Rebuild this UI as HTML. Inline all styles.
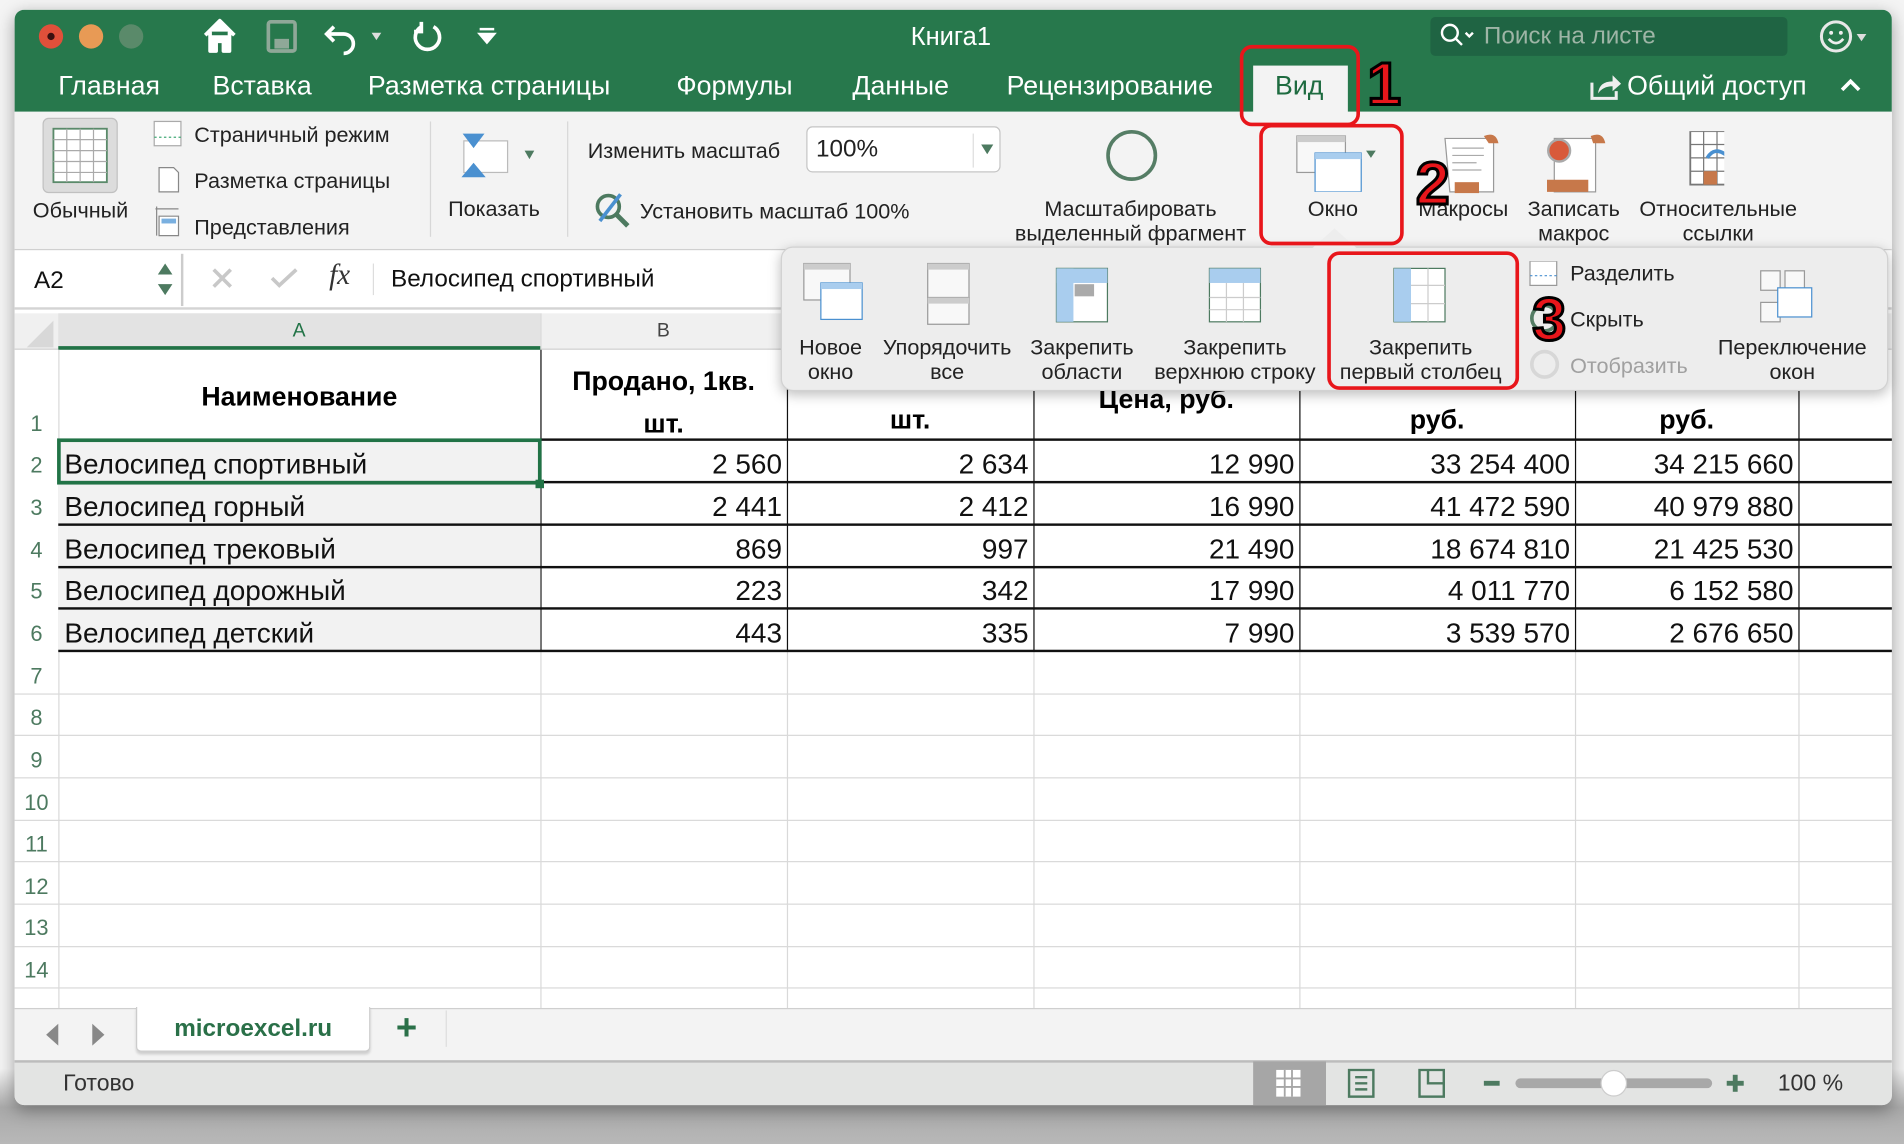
<!DOCTYPE html>
<html><head><meta charset="utf-8">
<style>
*{margin:0;padding:0;box-sizing:border-box}
html,body{width:1904px;height:1144px;overflow:hidden;background:#ececec}
#s{position:absolute;left:0;top:0;width:1568px;height:942px;transform:scale(1.21429,1.21444);transform-origin:0 0;font-family:"Liberation Sans","DejaVu Sans",sans-serif;background:linear-gradient(#f4f4f4 0,#f4f4f4 880px,#a9a9a9 912px,#b8b8b8 942px)}
.a{position:absolute;white-space:nowrap}
.t{color:#fff;font-size:22px;top:58px}
.r{font-size:17.8px;color:#222}
.c{text-align:center}
.cell{position:absolute;font-size:23px;color:#111;height:34px;line-height:36px;white-space:nowrap}
.num{text-align:right;padding-right:4px}
.rn{position:absolute;left:12px;width:36px;text-align:center;font-size:18px;color:#4d7a60}
.hl{position:absolute;height:1px;background:#d9d9d9}
.vl{position:absolute;width:1px;background:#d9d9d9}
.red{position:absolute;border:3px solid #e8161b;border-radius:10px}
.big{position:absolute;font-size:50px;font-weight:bold;color:#e8161b;-webkit-text-stroke:2.5px #000;font-family:"Liberation Sans",sans-serif}
</style></head><body><div id="s">
<div class="a" style="left:12px;top:8px;width:1546px;height:902px;background:#fff;border-radius:8px;box-shadow:0 4px 14px rgba(0,0,0,.35);overflow:hidden">
 <div class="a" style="left:0;top:0;width:1546px;height:84px;background:#27784c"></div>
 <div class="a" style="left:0;top:84px;width:1546px;height:114px;background:#f3f3f3;border-bottom:1px solid #d0d0d0"></div>
 <div class="a" style="left:0;top:199px;width:1546px;height:48px;background:#fff;border-bottom:2px solid #d4d4d4"></div>
 <div class="a" style="left:0;top:250px;width:1546px;height:30px;background:#f0f0f0;border-bottom:1px solid #d0d0d0"></div>
 <div class="a" style="left:0;top:822px;width:1546px;height:43px;background:#f3f3f3;border-top:1px solid #cfcfcf"></div>
 <div class="a" style="left:0;top:865px;width:1546px;height:37px;background:#e3e4e3;border-top:2px solid #bcbcbc"></div>
</div>
<div class="a" style="left:32px;top:20px;width:20px;height:20px;border-radius:50%;background:#e0503a"></div>
<div class="a" style="left:39px;top:27px;width:6px;height:6px;border-radius:50%;background:#3a1010"></div>
<div class="a" style="left:65px;top:20px;width:20px;height:20px;border-radius:50%;background:#e89a55"></div>
<div class="a" style="left:98px;top:20px;width:20px;height:20px;border-radius:50%;background:#5a8a6a"></div>
<svg class="a" style="left:165px;top:14px" width="260" height="32" viewBox="0 0 260 32">
 <path d="M4 15 L16 3 L28 15 M8 12 V28 H13 V20 H19 V28 H24 V12" fill="#fff" stroke="#fff" stroke-width="3" stroke-linejoin="round"/>
 <rect x="56" y="4" width="22" height="24" rx="2" fill="none" stroke="#8fa898" stroke-width="3"/><rect x="61" y="18" width="12" height="8" fill="#8fa898"/>
 <path d="M110 8 L104 14 L110 20 M104 14 H118 A8 8 0 0 1 118 30" fill="none" stroke="#fff" stroke-width="3"/>
 <path d="M141 13 l4 6 4-6z" fill="#ddd"/>
 <path d="M182 8 A10 10 0 1 0 192 8 M182 4 V12 H176" fill="none" stroke="#fff" stroke-width="3"/>
 <path d="M230 10 H242 M230 14 l6 7 6-7z" fill="#fff" stroke="#fff" stroke-width="2"/>
</svg>
<div class="a" style="left:750px;top:19px;font-size:21px;color:#fff">Книга1</div>
<div class="a" style="left:1178px;top:14px;width:294px;height:32px;background:#1f6443;border-radius:4px"></div>
<svg class="a" style="left:1185px;top:18px" width="36" height="24"><circle cx="9" cy="9" r="6.5" fill="none" stroke="#fff" stroke-width="2"/><path d="M13 13 L19 19 M22 9 l3 3 3-3" stroke="#fff" stroke-width="2" fill="none"/></svg>
<div class="a" style="left:1222px;top:19px;font-size:20px;color:#9eb5a6">Поиск на листе</div>
<svg class="a" style="left:1497px;top:15px" width="48" height="32"><circle cx="15" cy="15" r="12" fill="none" stroke="#e8e8e8" stroke-width="2.5"/><circle cx="11" cy="12" r="1.6" fill="#eee"/><circle cx="19" cy="12" r="1.6" fill="#eee"/><path d="M9 17 Q15 24 21 17" stroke="#eee" stroke-width="2.2" fill="none"/><path d="M32 13 l4 6 4-6z" fill="#ddd"/></svg>
<div class="a t" style="left:48px">Главная</div>
<div class="a t" style="left:175px">Вставка</div>
<div class="a t" style="left:303px">Разметка страницы</div>
<div class="a t" style="left:557px">Формулы</div>
<div class="a t" style="left:702px">Данные</div>
<div class="a t" style="left:829px">Рецензирование</div>
<div class="a" style="left:1032px;top:54px;width:78px;height:39px;background:#f3f3f3"></div>
<div class="a" style="left:1050px;top:58px;font-size:22px;color:#1e6b40">Вид</div>
<svg class="a" style="left:1308px;top:58px" width="28" height="26"><path d="M3 10 V23 H23 V17" fill="none" stroke="#eee" stroke-width="2.5"/><path d="M8 19 Q9 9 20 9 V4 L27 11 L20 17 V13 Q12 13 8 19z" fill="#eee"/></svg>
<div class="a t" style="left:1340px">Общий доступ</div>
<svg class="a" style="left:1514px;top:62px" width="20" height="16"><path d="M3 12 L10 5 L17 12" stroke="#fff" stroke-width="3" fill="none"/></svg>
<div class="a" style="left:35px;top:97px;width:62px;height:62px;background:#dcdcdc;border:1px solid #c0c0c0;border-radius:5px"></div>
<svg class="a" style="left:42px;top:104px" width="48" height="48"><rect x="2" y="2" width="44" height="44" fill="#fff" stroke="#5a8a6a" stroke-width="1.5"/><path d="M2 11 H46 M2 20 H46 M2 29 H46 M2 38 H46 M13 2 V46 M24 2 V46 M35 2 V46" stroke="#aaa" stroke-width="1"/></svg>
<div class="a r" style="left:27px;top:163px">Обычный</div>
<svg class="a" style="left:125px;top:98px" width="26" height="100"><rect x="2" y="2" width="22" height="20" fill="#fff" stroke="#aaa"/><path d="M2 15 H24" stroke="#4a7" stroke-dasharray="2 2"/><path d="M6 40 V60 H22 V44 L18 40z" fill="#fff" stroke="#888"/><path d="M3 74 H22 M4 72 V96 M6 80 H22 V96 H6z" fill="#fff" stroke="#888"/><rect x="8" y="82" width="12" height="4" fill="#7ab0e0"/></svg>
<div class="a r" style="left:160px;top:101px">Страничный режим</div>
<div class="a r" style="left:160px;top:139px">Разметка страницы</div>
<div class="a r" style="left:160px;top:177px">Представления</div>
<div class="a" style="left:354px;top:100px;width:1px;height:95px;background:#d7d7d7"></div>
<svg class="a" style="left:376px;top:106px" width="70" height="50"><rect x="6" y="10" width="36" height="26" fill="#fff" stroke="#bbb"/><path d="M5 4 H23 L14 16z M14 28 L24 40 H4z" fill="#4a90d0"/><path d="M56 18 l4 7 4-7z" fill="#4d7a60"/></svg>
<div class="a r" style="left:369px;top:162px">Показать</div>
<div class="a" style="left:467px;top:100px;width:1px;height:95px;background:#d7d7d7"></div>
<div class="a r" style="left:484px;top:114px">Изменить масштаб</div>
<div class="a" style="left:664px;top:104px;width:160px;height:38px;background:#fff;border:1px solid #c5c5c5;border-radius:5px"></div>
<div class="a" style="left:672px;top:112px;font-size:20px;color:#222">100%</div>
<div class="a" style="left:801px;top:110px;width:1px;height:28px;background:#ddd"></div>
<svg class="a" style="left:806px;top:117px" width="14" height="10"><path d="M2 2 l5 8 5-8z" fill="#4d7a60"/></svg>
<svg class="a" style="left:489px;top:158px" width="32" height="32"><circle cx="12" cy="12" r="9" fill="none" stroke="#4d7a60" stroke-width="3"/><path d="M19 19 L28 28" stroke="#4d7a60" stroke-width="4"/><path d="M5 24 L22 2" stroke="#4a90d0" stroke-width="3"/></svg>
<div class="a r" style="left:527px;top:164px">Установить масштаб 100%</div>
<div class="a" style="left:911px;top:107px;width:42px;height:42px;border:3px solid #557d65;border-radius:50%"></div>
<div class="a r c" style="left:826px;top:162px;width:210px;line-height:20px">Масштабировать<br>выделенный фрагмент</div>
<svg class="a" style="left:1065px;top:108px" width="70" height="50"><rect x="3" y="4" width="40" height="30" fill="#f8f8f8" stroke="#999"/><rect x="3" y="4" width="40" height="5" fill="#ccc"/><rect x="18" y="18" width="38" height="32" fill="#fff" stroke="#4a90d0"/><rect x="18" y="18" width="38" height="5" fill="#a9cdee"/><path d="M60 16 l4 6 4-6z" fill="#4d7a60"/></svg>
<div class="a r" style="left:1077px;top:162px">Окно</div>
<svg class="a" style="left:1180px;top:108px" width="240" height="56"><path d="M10 6 H50 V50 H14z" fill="#fff" stroke="#999"/><path d="M16 14 H42 M16 20 H42 M16 26 H36 M16 32 H40" stroke="#aaa"/><path d="M42 4 Q52 0 54 10 H46z" fill="#c7784a"/><rect x="18" y="42" width="20" height="9" fill="#c7784a"/><rect x="100" y="6" width="34" height="44" fill="#fff" stroke="#999"/><circle cx="104" cy="16" r="9" fill="#d85a3a" stroke="#aaa" stroke-width="2"/><path d="M130 4 Q140 0 142 10 H132z M94 40 H128 V50 H94z" fill="#c7784a"/><rect x="212" y="0" width="44" height="44" fill="#fff" stroke="#777" stroke-width="1.5"/><path d="M212 11 H256 M212 22 H256 M212 33 H256 M223 0 V44 M234 0 V44 M245 0 V44" stroke="#777"/><rect x="223" y="33" width="11" height="11" fill="#c7784a"/><path d="M226 22 Q232 12 242 20" stroke="#4a90d0" stroke-width="3" fill="none"/></svg>
<div class="a r" style="left:1168px;top:162px">Макросы</div>
<div class="a r c" style="left:1248px;top:162px;width:96px;line-height:20px">Записать<br>макрос</div>
<div class="a r c" style="left:1342px;top:162px;width:146px;line-height:20px">Относительные<br>ссылки</div>
<div class="a" style="left:12px;top:209px;width:139px;height:43px;border-right:2px solid #ccc"></div>
<div class="a" style="left:28px;top:220px;font-size:20px;color:#111">A2</div>
<svg class="a" style="left:128px;top:214px" width="16" height="34"><path d="M2 12 L8 3 L14 12z M2 20 L8 29 L14 20z" fill="#4d7a60"/></svg>
<svg class="a" style="left:172px;top:218px" width="80" height="26"><path d="M4 4 L18 18 M18 4 L4 18" stroke="#c8c8c8" stroke-width="3"/><path d="M52 11 L58 17 L72 4" stroke="#c8c8c8" stroke-width="3" fill="none"/></svg>
<div class="a" style="left:271px;top:214px;font-size:24px;font-style:italic;font-family:'Liberation Serif',serif;color:#333">fx</div>
<div class="a" style="left:307px;top:217px;width:1px;height:26px;background:#ddd"></div>
<div class="a" style="left:322px;top:219px;font-size:20px;color:#111">Велосипед спортивный</div>
<svg class="a" style="left:16px;top:262px" width="30" height="26"><path d="M28 2 V24 H6z" fill="#d8d8d8"/></svg>
<div class="a" style="left:48px;top:258px;width:397px;height:30px;background:#e3e3e3;border-bottom:3px solid #217346"></div>
<div class="a" style="left:241px;top:264px;font-size:16px;color:#217346">A</div>
<div class="a" style="left:541px;top:264px;font-size:16px;color:#444">B</div>
<div class="vl" style="left:445px;top:258px;height:30px"></div>
<div class="vl" style="left:648px;top:258px;height:30px"></div>
<div class="vl" style="left:48px;top:288px;height:542px"></div>
<div class="vl" style="left:445px;top:536px;height:294px"></div>
<div class="vl" style="left:648px;top:536px;height:294px"></div>
<div class="vl" style="left:851px;top:536px;height:294px"></div>
<div class="vl" style="left:1070px;top:536px;height:294px"></div>
<div class="vl" style="left:1297px;top:536px;height:294px"></div>
<div class="vl" style="left:1481px;top:536px;height:294px"></div>
<div class="a" style="left:445px;top:288px;width:1px;height:248px;background:#111"></div>
<div class="a" style="left:648px;top:288px;width:1px;height:248px;background:#111"></div>
<div class="a" style="left:851px;top:288px;width:1px;height:248px;background:#111"></div>
<div class="a" style="left:1070px;top:288px;width:1px;height:248px;background:#111"></div>
<div class="a" style="left:1297px;top:288px;width:1px;height:248px;background:#111"></div>
<div class="a" style="left:1481px;top:288px;width:1px;height:248px;background:#111"></div>
<div class="a" style="left:48px;top:362px;width:397px;height:174px;background:#f2f2f2"></div>
<div class="a" style="left:445px;top:361px;width:1113px;height:2px;background:#111"></div>
<div class="a" style="left:48px;top:396px;width:1510px;height:2px;background:#111"></div>
<div class="a" style="left:48px;top:431px;width:1510px;height:2px;background:#111"></div>
<div class="a" style="left:48px;top:466px;width:1510px;height:2px;background:#111"></div>
<div class="a" style="left:48px;top:500px;width:1510px;height:2px;background:#111"></div>
<div class="a" style="left:48px;top:535px;width:1510px;height:2px;background:#111"></div>
<div class="hl" style="left:12px;top:571px;width:1546px"></div>
<div class="hl" style="left:12px;top:605px;width:1546px"></div>
<div class="hl" style="left:12px;top:640px;width:1546px"></div>
<div class="hl" style="left:12px;top:675px;width:1546px"></div>
<div class="hl" style="left:12px;top:709px;width:1546px"></div>
<div class="hl" style="left:12px;top:744px;width:1546px"></div>
<div class="hl" style="left:12px;top:779px;width:1546px"></div>
<div class="hl" style="left:12px;top:813px;width:1546px"></div>
<div class="rn" style="top:339px">1</div><div class="rn" style="top:373px">2</div><div class="rn" style="top:408px">3</div><div class="rn" style="top:443px">4</div><div class="rn" style="top:477px">5</div><div class="rn" style="top:512px">6</div><div class="rn" style="top:547px">7</div><div class="rn" style="top:581px">8</div><div class="rn" style="top:616px">9</div><div class="rn" style="top:651px">10</div><div class="rn" style="top:685px">11</div><div class="rn" style="top:720px">12</div><div class="rn" style="top:754px">13</div><div class="rn" style="top:789px">14</div>
<div class="a" style="left:48px;top:314px;width:397px;text-align:center;font-size:22px;font-weight:bold">Наименование</div>
<div class="a" style="left:445px;top:296px;width:203px;text-align:center;font-size:22px;font-weight:bold;line-height:35px">Продано, 1кв.<br>шт.</div>
<div class="a" style="left:648px;top:333px;width:203px;text-align:center;font-size:22px;font-weight:bold">шт.</div>
<div class="a" style="left:851px;top:316px;width:219px;text-align:center;font-size:22px;font-weight:bold">Цена, руб.</div>
<div class="a" style="left:1070px;top:333px;width:227px;text-align:center;font-size:22px;font-weight:bold">руб.</div>
<div class="a" style="left:1297px;top:333px;width:184px;text-align:center;font-size:22px;font-weight:bold">руб.</div>
<div class="cell" style="left:53px;top:364px">Велосипед спортивный</div>
<div class="cell" style="left:53px;top:399px">Велосипед горный</div>
<div class="cell" style="left:53px;top:434px">Велосипед трековый</div>
<div class="cell" style="left:53px;top:468px">Велосипед дорожный</div>
<div class="cell" style="left:53px;top:503px">Велосипед детский</div>
<div class="cell num" style="left:445px;width:203px;top:364px">2 560</div><div class="cell num" style="left:648px;width:203px;top:364px">2 634</div><div class="cell num" style="left:851px;width:219px;top:364px">12 990</div><div class="cell num" style="left:1070px;width:227px;top:364px">33 254 400</div><div class="cell num" style="left:1297px;width:184px;top:364px">34 215 660</div>
<div class="cell num" style="left:445px;width:203px;top:399px">2 441</div><div class="cell num" style="left:648px;width:203px;top:399px">2 412</div><div class="cell num" style="left:851px;width:219px;top:399px">16 990</div><div class="cell num" style="left:1070px;width:227px;top:399px">41 472 590</div><div class="cell num" style="left:1297px;width:184px;top:399px">40 979 880</div>
<div class="cell num" style="left:445px;width:203px;top:434px">869</div><div class="cell num" style="left:648px;width:203px;top:434px">997</div><div class="cell num" style="left:851px;width:219px;top:434px">21 490</div><div class="cell num" style="left:1070px;width:227px;top:434px">18 674 810</div><div class="cell num" style="left:1297px;width:184px;top:434px">21 425 530</div>
<div class="cell num" style="left:445px;width:203px;top:468px">223</div><div class="cell num" style="left:648px;width:203px;top:468px">342</div><div class="cell num" style="left:851px;width:219px;top:468px">17 990</div><div class="cell num" style="left:1070px;width:227px;top:468px">4 011 770</div><div class="cell num" style="left:1297px;width:184px;top:468px">6 152 580</div>
<div class="cell num" style="left:445px;width:203px;top:503px">443</div><div class="cell num" style="left:648px;width:203px;top:503px">335</div><div class="cell num" style="left:851px;width:219px;top:503px">7 990</div><div class="cell num" style="left:1070px;width:227px;top:503px">3 539 570</div><div class="cell num" style="left:1297px;width:184px;top:503px">2 676 650</div>
<div class="a" style="left:47px;top:361px;width:399px;height:38px;border:3px solid #217346"></div>
<div class="a" style="left:441px;top:395px;width:7px;height:7px;background:#217346"></div>
<svg class="a" style="left:30px;top:840px" width="70" height="24"><path d="M18 3 L8 12 L18 21z" fill="#888"/><path d="M46 3 L56 12 L46 21z" fill="#888"/></svg>
<div class="a" style="left:112px;top:829px;width:193px;height:37px;background:#fff;border:1px solid #ccc;border-top:none;border-radius:0 0 4px 4px;box-shadow:0 2px 2px rgba(0,0,0,.15)"></div>
<div class="a" style="left:112px;top:836px;width:193px;text-align:center;font-size:20px;font-weight:bold;color:#2a7048">microexcel.ru</div>
<div class="a" style="left:326px;top:830px;font-size:30px;color:#2a7048;font-weight:bold">+</div>
<div class="a" style="left:367px;top:832px;width:1px;height:30px;background:#ddd"></div>
<div class="a" style="left:52px;top:882px;font-size:19px;color:#333">Готово</div>
<div class="a" style="left:1032px;top:874px;width:60px;height:36px;background:#a6a6a6"></div>
<svg class="a" style="left:1050px;top:880px" width="150" height="26"><rect x="1" y="1" width="20" height="22" fill="#fff"/><path d="M1 8 H21 M1 15 H21 M8 1 V23 M14 1 V23" stroke="#a6a6a6" stroke-width="1.5"/><rect x="61" y="1" width="20" height="22" fill="none" stroke="#4d7a60" stroke-width="2"/><path d="M66 7 H76 M66 12 H76 M66 17 H76" stroke="#4d7a60" stroke-width="2"/><rect x="119" y="1" width="20" height="22" fill="none" stroke="#4d7a60" stroke-width="2"/><path d="M126 1 V12 H139" stroke="#4d7a60" stroke-width="2" fill="none"/></svg>
<div class="a" style="left:1222px;top:890px;width:13px;height:4px;background:#4d7a60"></div>
<div class="a" style="left:1248px;top:888px;width:162px;height:8px;background:#a8a8a8;border-radius:4px"></div>
<div class="a" style="left:1318px;top:881px;width:22px;height:22px;background:#fff;border-radius:50%;border:1px solid #ccc"></div>
<div class="a" style="left:1422px;top:890px;width:14px;height:4px;background:#4d7a60"></div>
<div class="a" style="left:1427px;top:885px;width:4px;height:14px;background:#4d7a60"></div>
<div class="a" style="left:1464px;top:882px;font-size:19px;color:#333">100 %</div>
<div class="a" style="left:643px;top:203px;width:912px;height:119px;background:#ededed;border:1px solid #d2d2d2;border-radius:10px;box-shadow:0 3px 10px rgba(0,0,0,.25)"></div>
<svg class="a" style="left:1080px;top:188px" width="38" height="17"><path d="M0 17 L19 0 L38 17z" fill="#ededed"/></svg>
<svg class="a" style="left:660px;top:215px" width="840" height="56">
 <rect x="2" y="2" width="38" height="30" fill="#f8f8f8" stroke="#999"/><rect x="2" y="2" width="38" height="5" fill="#ccc"/><rect x="16" y="18" width="34" height="30" fill="#fff" stroke="#4a90d0"/><rect x="16" y="18" width="34" height="5" fill="#a9cdee"/>
 <rect x="104" y="2" width="34" height="28" fill="#f8f8f8" stroke="#999"/><rect x="104" y="2" width="34" height="5" fill="#ccc"/><rect x="104" y="30" width="34" height="22" fill="#f8f8f8" stroke="#999"/><rect x="104" y="30" width="34" height="5" fill="#ccc"/>
 <rect x="210" y="6" width="42" height="44" fill="#fff" stroke="#4d7a60"/><rect x="210" y="6" width="42" height="12" fill="#a9cdee"/><rect x="210" y="6" width="14" height="44" fill="#a9cdee"/><rect x="225" y="19" width="16" height="10" fill="#aaa"/>
 <rect x="336" y="6" width="42" height="44" fill="#fff" stroke="#4d7a60"/><rect x="336" y="6" width="42" height="12" fill="#a9cdee"/><path d="M336 30 H378 M336 40 H378 M350 18 V50 M364 18 V50" stroke="#ccc"/>
 <rect x="488" y="6" width="42" height="44" fill="#fff" stroke="#4d7a60"/><rect x="488" y="6" width="14" height="44" fill="#a9cdee"/><path d="M502 20 H530 M502 35 H530 M516 6 V50" stroke="#ccc"/>
 <rect x="600" y="0" width="22" height="20" fill="#fff" stroke="#999"/><path d="M600 12 H622" stroke="#4a90d0" stroke-dasharray="2 2"/>
 <rect x="790" y="8" width="16" height="16" fill="#f8f8f8" stroke="#999"/><rect x="810" y="8" width="16" height="16" fill="#f8f8f8" stroke="#999"/><rect x="790" y="34" width="16" height="16" fill="#f8f8f8" stroke="#999"/><rect x="804" y="22" width="28" height="24" fill="#fff" stroke="#4a90d0"/><path d="M840 22 l4 6 4-6z" fill="#4d7a60"/>
</svg>
<div class="a r c" style="left:649px;top:276px;width:70px;line-height:20px">Новое<br>окно</div>
<div class="a r c" style="left:720px;top:276px;width:120px;line-height:20px">Упорядочить<br>все</div>
<div class="a r c" style="left:839px;top:276px;width:104px;line-height:20px">Закрепить<br>области</div>
<div class="a r c" style="left:942px;top:276px;width:150px;line-height:20px">Закрепить<br>верхнюю строку</div>
<div class="a r c" style="left:1094px;top:276px;width:152px;line-height:20px">Закрепить<br>первый столбец</div>
<div class="a r" style="left:1293px;top:215px">Разделить</div>
<div class="a" style="left:1260px;top:250px;width:24px;height:24px;border:3px solid #557d65;border-radius:50%"></div>
<div class="a r" style="left:1293px;top:253px">Скрыть</div>
<div class="a" style="left:1260px;top:288px;width:24px;height:24px;border:3px solid #d7d7d7;border-radius:50%"></div>
<div class="a r" style="left:1293px;top:291px;color:#a0a0a0">Отобразить</div>
<div class="a r c" style="left:1403px;top:276px;width:146px;line-height:20px">Переключение<br>окон</div>
<div class="red" style="left:1021px;top:37px;width:99px;height:67px"></div>
<div class="big" style="left:1126px;top:40px">1</div>
<div class="red" style="left:1037px;top:102px;width:119px;height:100px"></div>
<div class="big" style="left:1166px;top:122px">2</div>
<div class="red" style="left:1093px;top:207px;width:158px;height:114px"></div>
<div class="big" style="left:1262px;top:234px">3</div>
</div></body></html>
